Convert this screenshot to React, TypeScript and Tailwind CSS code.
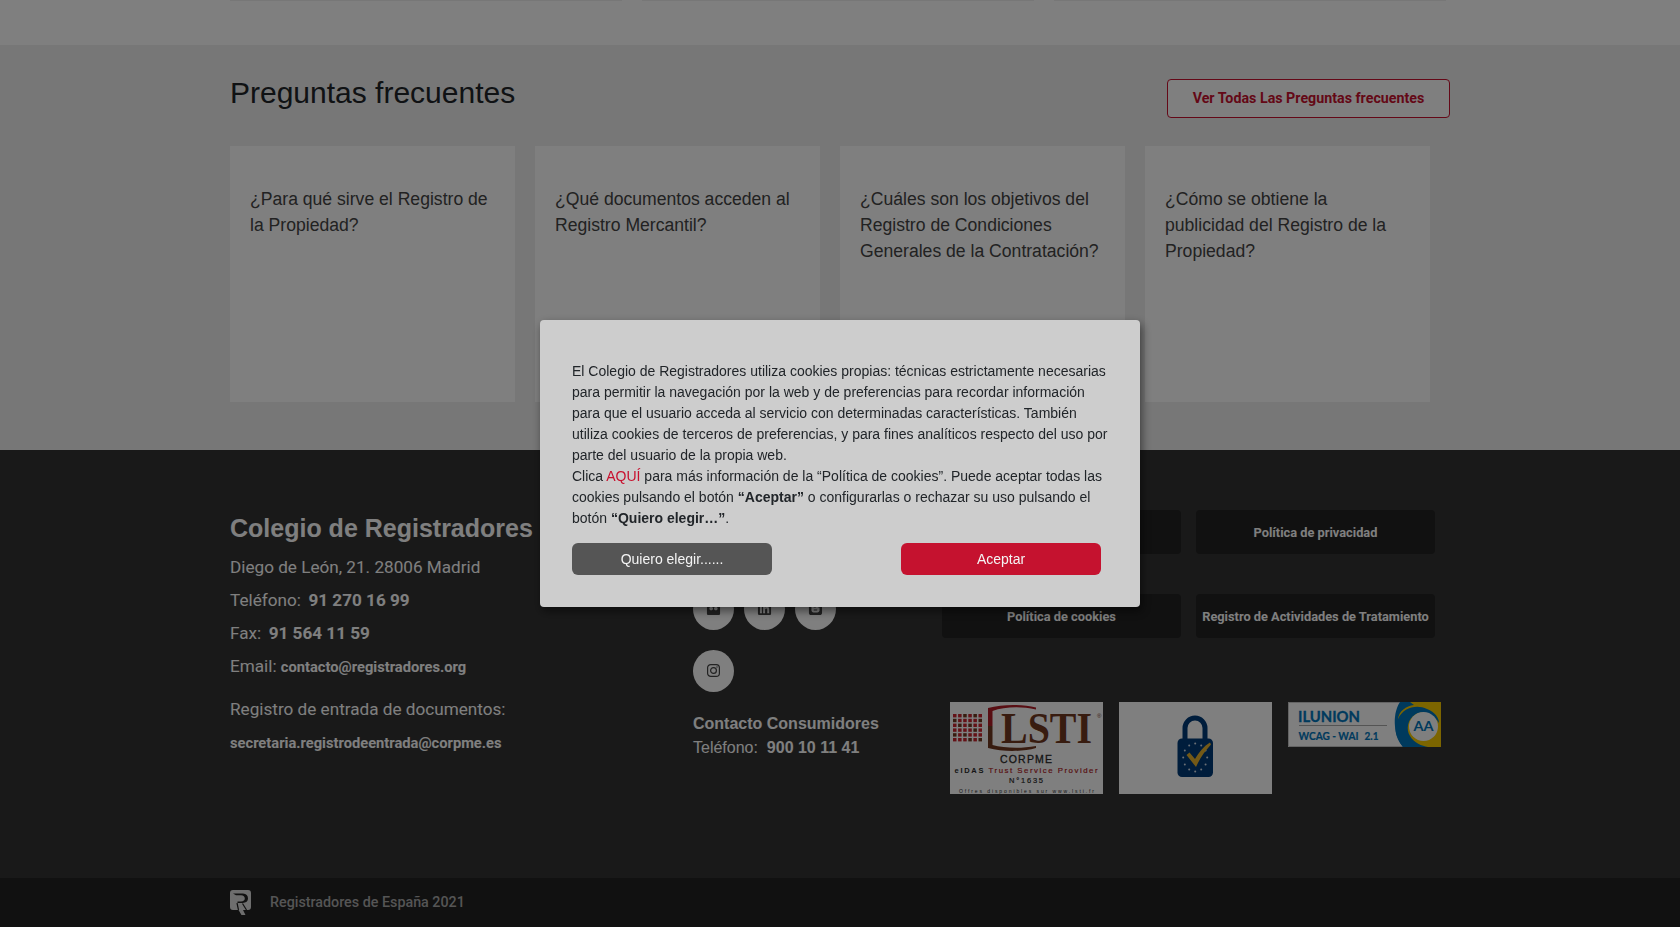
import React from "react";
import { FaBlogger, FaFlickr, FaLinkedin } from "react-icons/fa";

const faqs = [
  "¿Para qué sirve el Registro de la Propiedad?",
  "¿Qué documentos acceden al Registro Mercantil?",
  "¿Cuáles son los objetivos del Registro de Condiciones Generales de la Contratación?",
  "¿Cómo se obtiene la publicidad del Registro de la Propiedad?",
];

const policies = ["Aviso legal", "Política de privacidad", "Política de cookies", "Registro de Actividades de Tratamiento"];

function InstagramIcon({ size }: { size: number }) {
  return (
    <svg width={size} height={size} viewBox="0 0 15 15" fill="none" stroke="currentColor" strokeWidth="1.2">
      <rect x="1.600" y="1.600" width="11.800" height="11.800" rx="3.200" />
      <circle cx="7.500" cy="7.500" r="2.900" />
      <circle cx="11" cy="4" r=".7" fill="currentColor" stroke="none" />
    </svg>
  );
}

const socials = [
  { name: "Flickr", Icon: FaFlickr },
  { name: "LinkedIn", Icon: FaLinkedin },
  { name: "Blogger", Icon: FaBlogger },
  { name: "Instagram", Icon: InstagramIcon },
];

function LstiBadge() {
  const cells: React.ReactElement[] = [];
  for (let r = 0; r < 6; r++)
    for (let c = 0; c < 6; c++)
      cells.push(
        <rect key={`${r}-${c}`} x={3 + c * 5.1} y={12 + r * 4.8} width="3.5" height="3.4" fill={(r * 5 + c * 3) % 7 > 4 ? "#713820" : "#c9242f"} />,
      );
  return (
    <svg width="153" height="92" viewBox="0 0 153 92" className="block bg-white">
      {cells}
      <path d="M86 5.500C72 2 53 2 38 6V24H42.500V9C54 5 70 4 86 7.500Z" fill="#b01c26" />
      <path d="M38 24V46C53 50 72 50 86 46V44C70 47 54 46 42.500 43V24Z" fill="#713820" />
      <text x="51" y="40.500" textLength="91" lengthAdjust="spacingAndGlyphs" fill="#713820" fontFamily="Liberation Serif, serif" fontWeight="700" fontSize="44">
        LSTI
      </text>
      <text x="147" y="15.500" fill="#713820" fontFamily="Liberation Sans, sans-serif" fontSize="6">
        ®
      </text>
      <g fontFamily="Liberation Sans, sans-serif" fill="#2b2b2b">
        <text x="50" y="61" fontSize="10.500" textLength="52" stroke="#2b2b2b" strokeWidth=".3">CORPME</text>
        <text x="4.500" y="70.500" fontSize="7.500" fontWeight="700" textLength="29">eIDAS</text>
        <text x="38.500" y="70.500" fontSize="7.800" fill="#b01c26" stroke="#b01c26" strokeWidth=".2" textLength="109">Trust Service Provider</text>
        <text x="59" y="81" fontSize="7.500" stroke="#2b2b2b" strokeWidth=".2" textLength="34">N°1635</text>
        <text x="9" y="90.500" fontSize="5" textLength="135">Offres disponibles sur www.lsti.fr</text>
      </g>
    </svg>
  );
}

function LockBadge() {
  return (
    <svg width="153" height="92" viewBox="0 0 153 92" className="block bg-white">
      <path d="M66 39V26a10 10 0 0 1 20 0V39" fill="none" stroke="#003a78" strokeWidth="5" />
      <rect x="58.500" y="36.500" width="35.500" height="38.500" rx="4.500" fill="#003a78" />
      {Array.from({ length: 12 }, (_, i) => (
        <circle key={i} cx={76.2 + 12 * Math.sin((i * Math.PI) / 6)} cy={55.5 - 14 * Math.cos((i * Math.PI) / 6)} r="1" fill="#d4deea" />
      ))}
      <path d="M67.500 53L70.500 50.500L76 57C80 50 85 44 91 40.500L92 42.500C86 49 81 56 77 65Z" fill="#e6b32e" />
    </svg>
  );
}

function IlunionBadge() {
  return (
    <svg width="153" height="45" viewBox="0 0 153 45" className="block bg-white">
      <path d="M.5 0V44.500H118M0 .5H114" fill="none" stroke="#c8c8c8" />
      <path d="M112 0C105 10 104 31 115 45H153V0Z" fill="#0075bb" />
      <path d="M110 17C111 9 118 4 126 3L122 0H153V45H135C122 42 118 34 119 26Z" fill="#f8ca00" />
      <path d="M110 17C115 6 128 2 139 7C147 10 151 16 151 21C144 10 134 9 128 12C119 17 118 28 122 34C126 41 134 44 140 45H115C106 34 106 24 110 17Z" fill="#0075bb" />
      <circle cx="135.500" cy="24.500" r="14.500" fill="#fff" />
      <path d="M11 23.500H99" stroke="#a8a8a8" />
      <g fill="#0075bb" fontFamily="Lato, sans-serif" fontWeight="700">
        <text x="10" y="20" fontSize="14.500" textLength="62" lengthAdjust="spacingAndGlyphs" stroke="#0075bb" strokeWidth=".3">ILUNION</text>
        <text x="10.500" y="38" fontSize="11" textLength="60" lengthAdjust="spacingAndGlyphs" stroke="#0075bb" strokeWidth=".2">WCAG - WAI</text>
        <text x="76.500" y="38" fontSize="11" textLength="14" lengthAdjust="spacingAndGlyphs" stroke="#0075bb" strokeWidth=".2">2.1</text>
        <text x="125.500" y="29" fontSize="13" textLength="20" lengthAdjust="spacingAndGlyphs">AA</text>
      </g>
    </svg>
  );
}

function Logo() {
  return (
    <svg width="21" height="25" viewBox="0 0 21 25" className="block">
      <path d="M3 0H18Q21 0 21 3V17Q21 20 18 20H13L15.500 25H11.500L8.500 20H3Q0 20 0 17V3Q0 0 3 0Z" fill="#ddd" />
      <path d="M3 3.500H13Q18 4 18 8.500Q18 12.500 12.500 13H7.500V11.500H11Q14.800 11 14.800 8.500Q14.800 5.500 11 5.200H6Z" fill="#222" />
      <path d="M7 13L8.500 20M12.500 13.500L16.500 20" stroke="#222" strokeWidth="1.200" />
    </svg>
  );
}

function CookieDialog() {
  return (
    <div className="fixed inset-0 flex items-center justify-center bg-black/50">
      <div className="h-[287px] w-[600px] rounded bg-[#cdcdcd] px-8 pt-[41px] text-sm leading-[21px] text-[#212529] shadow-[2px_4px_10px_rgba(0,0,0,0.5)]">
        <p className="w-[540px]">
          El Colegio de Registradores utiliza cookies propias: técnicas estrictamente necesarias
          <br />
          para permitir la navegación por la web y de preferencias para recordar información
          <br />
          para que el usuario acceda al servicio con determinadas características. También
          <br />
          utiliza cookies de terceros de preferencias, y para fines analíticos respecto del uso por
          <br />
          parte del usuario de la propia web.
        </p>
        <p className="w-[540px]">
          Clica <a className="text-[#c8102e]">AQUÍ</a> para más información de la “Política de cookies”. Puede aceptar todas las
          <br />
          cookies pulsando el botón <strong>“Aceptar”</strong> o configurarlas o rechazar su uso pulsando el
          <br />
          botón <strong>“Quiero elegir…”</strong>.
        </p>
        <div className="mt-[14px] flex w-[529px] justify-between">
          <button className="h-8 w-[200px] rounded-md bg-[#555] text-[#f4f4f4]">Quiero elegir......</button>
          <button className="h-8 w-[200px] rounded-md bg-[#c5122f] text-[#f4f4f4]">Aceptar</button>
        </div>
      </div>
    </div>
  );
}

export default function App() {
  return (
    <div className="flex h-[927px] flex-col overflow-hidden bg-white font-['Liberation_Sans',sans-serif]">
      <div className="flex h-[45px] shrink-0 gap-5 pl-[230px]">
        <div className="h-px w-[392px] bg-[#efefef]" />
        <div className="h-px w-[392px] bg-[#efefef]" />
        <div className="h-px w-[392px] bg-[#efefef]" />
      </div>

      <section className="h-[405px] shrink-0 bg-[#eee] pl-[230px]">
        <div className="flex h-[101px] w-[1220px] items-start justify-between">
          <h2 className="mt-[30px] text-[30px] leading-9 text-[#212529]">Preguntas frecuentes</h2>
          <button className="mt-[34px] h-[39px] w-[283px] rounded border border-[#c8102e] bg-white font-[Roboto,sans-serif] text-[14.25px] font-bold text-[#c8102e]">
            Ver Todas Las Preguntas frecuentes
          </button>
        </div>
        <div className="flex gap-5">
          {faqs.map((q) => (
            <article key={q} className="h-64 w-[285px] bg-white px-5 pt-10 text-[17.6px] leading-[26px] text-[#444]">
              {q}
            </article>
          ))}
        </div>
      </section>

      <footer className="grid h-[428px] shrink-0 grid-cols-[463px_249px_1fr] bg-[#333] pl-[230px] text-white">
        <div className="pt-[60px] font-[Roboto,sans-serif] text-[17.15px] leading-[33px]">
          <h3 className="mb-[5px] font-['Liberation_Sans',sans-serif] text-[25px] leading-9 font-bold">Colegio de Registradores</h3>
          <p>Diego de León, 21. 28006 Madrid</p>
          <p>
            Teléfono: &nbsp;<b className="-ml-px">91 270 16 99</b>
          </p>
          <p>
            Fax: &nbsp;<b className="-ml-px">91 564 11 59</b>
          </p>
          <p>
            Email: <b className="text-[14.7px]">contacto@registradores.org</b>
          </p>
          <p className="mt-[9px]">Registro de entrada de documentos:</p>
          <p>
            <b className="text-[14.7px]">secretaria.registrodeentrada@corpme.es</b>
          </p>
        </div>

        <div className="pt-[138px] leading-6">
          <div className="flex w-[160px] flex-wrap gap-x-[10px] gap-y-5">
            {socials.map(({ name, Icon }) => (
              <a key={name} aria-label={name} className="flex h-[42px] w-[41px] items-center justify-center rounded-[50%] bg-white pb-[2px] text-[#444]">
                <Icon size={15} />
              </a>
            ))}
          </div>
          <p className="mt-5 font-bold">Contacto Consumidores</p>
          <p>
            Teléfono: &nbsp;<b>900 10 11 41</b>
          </p>
        </div>

        <div className="pt-[60px]">
          <div className="grid w-[493px] grid-cols-2 gap-x-[15px] gap-y-10">
            {policies.map((p) => (
              <a key={p} className="flex h-11 items-center justify-center rounded bg-[#222] pt-[2px] font-[Roboto,sans-serif] text-[12.8px] font-bold whitespace-nowrap">
                {p}
              </a>
            ))}
          </div>
          <div className="mt-16 flex items-start gap-4 pl-2">
            <LstiBadge />
            <LockBadge />
            <IlunionBadge />
          </div>
        </div>
      </footer>

      <div className="flex h-[49px] shrink-0 items-center bg-[#222] pl-[230px] font-[Roboto,sans-serif] text-[14.3px] font-medium text-[#aaa]">
        <Logo />
        <span className="ml-[19px]">Registradores de España 2021</span>
      </div>

      <CookieDialog />
    </div>
  );
}
